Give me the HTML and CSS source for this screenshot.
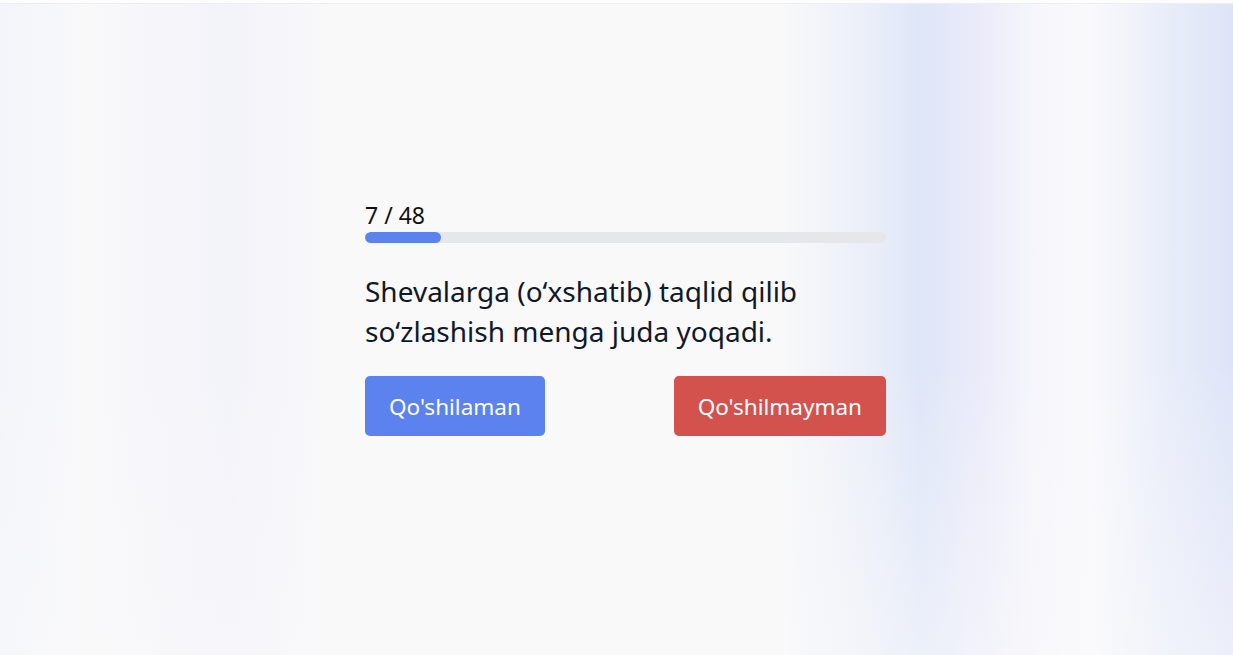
FILE: index.html
```html
<!DOCTYPE html>
<html lang="uz">
<head>
<meta charset="UTF-8">
<title>Test</title>
<link rel="stylesheet" href="styles.css">
</head>
<body>
	<div class="topline"></div>
	<main class="page">
		<section class="quiz">
			<div class="counter">7 / 48</div>
			<div class="progress">
				<div class="progress_fill" style="width: 14.58%"></div>
			</div>
			<p class="question">Shevalarga (o‘xshatib) taqlid qilib so‘zlashish menga juda yoqadi.</p>
			<div class="answers">
				<button type="button" class="btn btn_yes">Qo'shilaman</button>
				<button type="button" class="btn btn_no">Qo'shilmayman</button>
			</div>
		</section>
	</main>
</body>
</html>
```

FILE: styles.css
```css
html, body {
	height: 100%;
}

body {
	margin: 0;
	font-family: "Noto Sans", "Open Sans", sans-serif;
	color: #111827;
	background-color: #f9f9fa;
	background-image:
		linear-gradient(180deg, rgba(250, 250, 251, 0) 55%, rgba(250, 250, 251, 0.5) 100%),
		linear-gradient(90deg,
			rgba(240, 242, 250, 0.6) 0px,
			rgba(249, 249, 250, 0) 90px,
			rgba(240, 240, 250, 0.7) 230px,
			rgba(249, 249, 250, 0) 330px,
			rgba(249, 249, 250, 0) 780px,
			rgba(228, 234, 248, 0.7) 870px,
			rgba(222, 230, 248, 1) 920px,
			rgba(236, 236, 250, 1) 985px,
			rgba(246, 246, 252, 1) 1035px,
			rgba(250, 250, 252, 1) 1090px,
			rgba(234, 238, 250, 1) 1160px,
			rgba(222, 228, 248, 1) 1233px);
	display: flex;
	flex-direction: column;
}

.topline {
	height: 3px;
	background: #fdfdfd;
	border-bottom: 1px solid #eceef0;
}

.page {
	flex: 1;
	display: flex;
	align-items: flex-start;
	padding: 196px 0 0 365px;
}

.quiz {
	width: 521px;
}

.counter {
	font-size: 23px;
	line-height: 30px;
	color: #111;
	margin-bottom: 2px;
}

.progress {
	height: 11px;
	border-radius: 6px;
	background: #e5e7eb;
	overflow: hidden;
}

.progress_fill {
	height: 100%;
	border-radius: 6px;
	background: #5b82ee;
}

.question {
	margin: 28px 0 0;
	font-size: 28px;
	line-height: 40px;
	color: #111827;
	padding-right: 60px;
}

.answers {
	display: flex;
	justify-content: space-between;
	margin-top: 25px;
}

.btn {
	height: 60px;
	padding: 0 24px;
	border: none;
	border-radius: 5px;
	color: #fff;
	font-family: inherit;
	font-size: 22.5px;
	cursor: pointer;
}

.btn_yes {
	background: #5b82ee;
}

.btn_no {
	background: #d4524e;
}
```
